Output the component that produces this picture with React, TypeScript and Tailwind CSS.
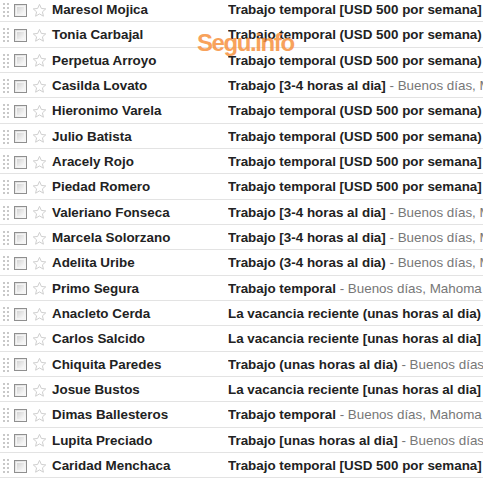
const rows: { name: string; subject: string; snippet?: string }[] = [
  { name: "Maresol Mojica", subject: "Trabajo temporal [USD 500 por semana]" },
  { name: "Tonia Carbajal", subject: "Trabajo temporal (USD 500 por semana)" },
  { name: "Perpetua Arroyo", subject: "Trabajo temporal (USD 500 por semana)" },
  { name: "Casilda Lovato", subject: "Trabajo [3-4 horas al dia]", snippet: "Buenos días, Mahoma recibió su currículum" },
  { name: "Hieronimo Varela", subject: "Trabajo temporal (USD 500 por semana)" },
  { name: "Julio Batista", subject: "Trabajo temporal (USD 500 por semana)" },
  { name: "Aracely Rojo", subject: "Trabajo temporal [USD 500 por semana]" },
  { name: "Piedad Romero", subject: "Trabajo temporal [USD 500 por semana]" },
  { name: "Valeriano Fonseca", subject: "Trabajo [3-4 horas al dia]", snippet: "Buenos días, Mahoma recibió su currículum" },
  { name: "Marcela Solorzano", subject: "Trabajo [3-4 horas al dia]", snippet: "Buenos días, Mahoma recibió su currículum" },
  { name: "Adelita Uribe", subject: "Trabajo (3-4 horas al dia)", snippet: "Buenos días, Mahoma recibió su currículum" },
  { name: "Primo Segura", subject: "Trabajo temporal", snippet: "Buenos días, Mahoma recibió su currículum" },
  { name: "Anacleto Cerda", subject: "La vacancia reciente (unas horas al dia)" },
  { name: "Carlos Salcido", subject: "La vacancia reciente [unas horas al dia]" },
  { name: "Chiquita Paredes", subject: "Trabajo (unas horas al dia)", snippet: "Buenos días, Mahoma recibió su currículum" },
  { name: "Josue Bustos", subject: "La vacancia reciente [unas horas al dia]" },
  { name: "Dimas Ballesteros", subject: "Trabajo temporal", snippet: "Buenos días, Mahoma recibió su currículum" },
  { name: "Lupita Preciado", subject: "Trabajo [unas horas al dia]", snippet: "Buenos días, Mahoma recibió su currículum" },
  { name: "Caridad Menchaca", subject: "Trabajo temporal [USD 500 por semana]" },
];

function Handle() {
  return (
    <div className="grid grid-cols-2 gap-x-[2px] gap-y-[2px] w-[6px] ml-[3px] mr-[5px]">
      {Array.from({ length: 8 }).map((_, i) => (
        <span key={i} className="block w-[2px] h-[2px] bg-[#c8c8c8]" />
      ))}
    </div>
  );
}

function Checkbox() {
  return (
    <div className="w-[13px] h-[13px] border border-[#8f8f8f] bg-gradient-to-br from-[#dcdcdc] to-[#fbfbfb] p-[1px]">
      <div className="w-full h-full border border-[#f4f4f4] bg-gradient-to-br from-[#d4d4d4] to-[#fafafa]" />
    </div>
  );
}

function Star() {
  return (
    <svg width="15" height="15" viewBox="0 0 24 24" className="ml-[5px] mr-[5px]">
      <path
        d="M12 2.2l2.95 6.5 7.05.7-5.3 4.75 1.55 6.95L12 17.45 5.75 21.1l1.55-6.95L2 9.4l7.05-.7z"
        fill="#fff"
        stroke="#cfcfcf"
        strokeWidth="1.6"
        strokeLinejoin="round"
      />
    </svg>
  );
}

export default function App() {
  return (
    <div className="relative w-[483px] h-[481px] overflow-hidden bg-white font-['Liberation_Sans',Arial,sans-serif] text-[13.4px]">
      <div className="-mt-[3px]">
        {rows.map((r, i) => (
          <div key={i} className="flex items-center h-[25.33px] pt-[2px] border-b border-[#e3e3e3] whitespace-nowrap">
            <Handle />
            <Checkbox />
            <Star />
            <div className="w-[176px] font-bold text-[#222]">{r.name}</div>
            <div className="flex-1 overflow-hidden">
              <span className="font-bold text-[#222]">{r.subject}</span>
              {r.snippet && <span className="text-[#777]"> - {r.snippet}</span>}
            </div>
          </div>
        ))}
      </div>
      <div className="absolute left-[197px] top-[25px] text-[24px] font-bold text-[#f7923f] opacity-85 tracking-[-1.4px] font-['Liberation_Sans',Arial,sans-serif]">
        Segu.info
      </div>
    </div>
  );
}
